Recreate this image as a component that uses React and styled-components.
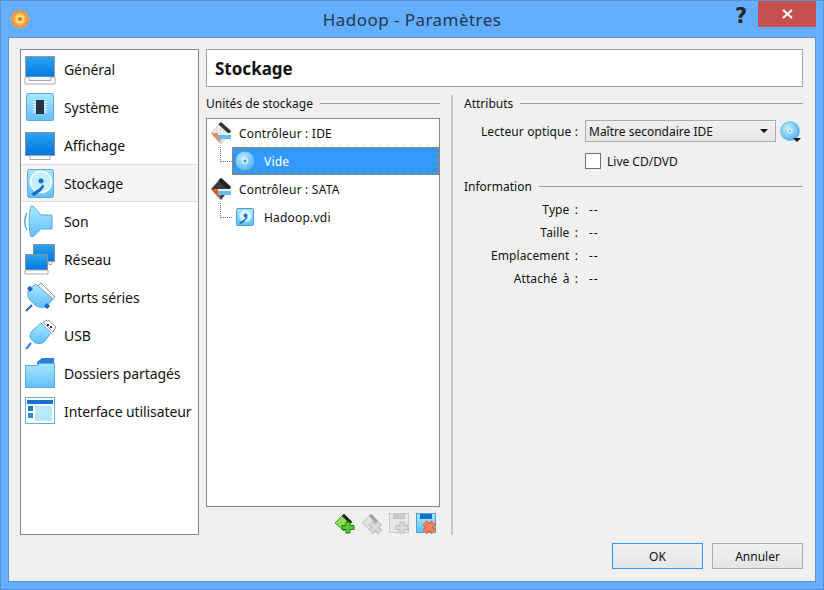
import React from 'react';
import styled, { createGlobalStyle } from 'styled-components';

const Global = createGlobalStyle`
  html, body { margin: 0; padding: 0; width: 824px; height: 590px; overflow: hidden; background: #63aeff; }
  * { box-sizing: border-box; }
`;

const Window = styled.div`
  width: 824px; height: 590px; display: flex; flex-direction: column;
  background: #63aeff; border: 1px solid #5a93cf;
  font-family: "Noto Sans", "Liberation Sans", sans-serif; color: #111;
`;
const TitleBar = styled.div`
  height: 36px; flex: none; display: flex; align-items: flex-start; position: relative; padding-left: 9px;
`;
const AppIcon = styled.svg`width: 20px; height: 20px; margin-top: 8px; flex: none;`;
const Title = styled.div`
  position: absolute; left: 0; right: 0; top: 7px; text-align: center;
  font-size: 17px; line-height: 23px; color: #24374f; letter-spacing: 0.45px;
`;
const HelpButton = styled.div`
  margin-left: auto; margin-right: 3px; margin-top: 2px; width: 28px; height: 26px; text-align: center;
  font: bold 21px/26px "DejaVu Sans", sans-serif; color: #262626;
`;
const CloseButton = styled.div`
  width: 58px; height: 26px; margin-right: 7px; background: #c75050;
  display: flex; align-items: center; justify-content: center;
`;
const Client = styled.div`
  flex: 1; margin: 0 7px 7px; background: #f0f0f0; border: 1px solid #5a93cf;
  padding: 11px 12px 12px 11px; display: flex; flex-direction: column; min-height: 0;
`;
const Main = styled.div`display: flex; height: 486px; flex: none;`;
const SideList = styled.div`
  width: 179px; flex: none; background: #fff; border: 1px solid #828790;
`;
const SideRow = styled.div`
  height: 38px; display: flex; align-items: center; padding-left: 2px; gap: 8px;
  font-size: 14px; color: #111;
  background: ${p => (p.$active ? '#f5f5f5' : 'transparent')};
  border-top: 1px solid ${p => (p.$active ? '#dedede' : 'transparent')};
  border-bottom: 1px solid ${p => (p.$active ? '#dedede' : 'transparent')};
`;
const SideIcon = styled.svg`width: 32px; height: 32px; flex: none; margin-left: 1px;`;
const SideLabel = styled.span`white-space: nowrap; letter-spacing: -0.1px;`;
const Content = styled.div`flex: 1; margin-left: 7px; display: flex; flex-direction: column; min-width: 0;`;
const Header = styled.div`
  height: 38px; flex: none; background: #fff; border: 1px solid #a0a0a0; padding-left: 8px;
  font-size: 17px; font-weight: 700; line-height: 37px; color: #111;
`;
const Panes = styled.div`flex: 1; display: flex; margin-top: 8px; min-height: 0;`;
const LeftPane = styled.div`width: 234px; flex: none; display: flex; flex-direction: column;`;
const Divider = styled.div`width: 2px; flex: none; background: #c8c8c8; margin-left: 11px;`;
const RightPane = styled.div`flex: 1; margin-left: 11px; min-width: 0;`;
const GroupHeading = styled.div`
  display: flex; align-items: center; gap: 7px; height: 16px; font-size: 12px; color: #111; white-space: nowrap;
  &::after { content: ''; flex: 1; height: 1px; background: #a0a0a0; }
`;
const Tree = styled.div`
  height: 389px; margin-top: 7px; background: #fff; border: 1px solid #828790; flex: none; letter-spacing: 0.2px;
`;
const TreeRow = styled.div`display: flex; align-items: center; height: 28px; font-size: 12px; white-space: nowrap;`;
const CtrlIcon = styled.svg`width: 24px; height: 24px; margin-left: 2px; flex: none;`;
const CtrlLabel = styled.span`margin-left: 6px;`;
const Elbow = styled.span`
  width: 12px; height: 15px; margin-left: 13px; margin-bottom: 14px; flex: none;
  border-left: 1px dotted #777; border-bottom: 1px dotted #777;
`;
const ChildCell = styled.div`
  flex: 1; height: 28px; display: flex; align-items: center; padding-left: 3px; gap: 9px;
  background: ${p => (p.$selected ? '#3399ff' : 'transparent')};
  color: ${p => (p.$selected ? '#fff' : '#111')};
  outline: ${p => (p.$selected ? '1px dotted #d9741c' : 'none')};
  outline-offset: -1px;
`;
const ChildIcon = styled.svg`width: 20px; height: 20px; flex: none;`;
const Toolbar = styled.div`display: flex; justify-content: flex-end; gap: 5px; margin-top: 5px; padding-right: 3px;`;
const ToolIcon = styled.svg`width: 22px; height: 22px; flex: none;`;
const FormRow = styled.div`display: flex; align-items: center; margin-top: 9px; height: 22px;`;
const FieldLabel = styled.div`
  width: 114px; flex: none; text-align: right; font-size: 12px; white-space: nowrap; letter-spacing: 0.1px;
`;
const InfoLabel = styled(FieldLabel)`word-spacing: 2px;`;
const Combo = styled.div`
  width: 191px; height: 22px; margin-left: 7px; border: 1px solid #acacac;
  background: linear-gradient(#f0f0f0, #e5e5e5);
  display: flex; align-items: center; justify-content: space-between; padding: 0 7px 0 3px; font-size: 12px;
`;
const Caret = styled.span`
  width: 0; height: 0; border-left: 4px solid transparent; border-right: 4px solid transparent; border-top: 4px solid #111;
`;
const DiscButton = styled.svg`width: 24px; height: 24px; margin-left: 3px; flex: none;`;
const CheckRow = styled.div`display: flex; align-items: center; gap: 6px; margin: 9px 0 0 121px; height: 20px; font-size: 12px;`;
const CheckBox = styled.span`width: 16px; height: 16px; background: #fff; border: 1px solid #707070; flex: none;`;
const InfoBlock = styled.div`margin-top: 7px;`;
const InfoRow = styled.div`display: flex; align-items: center; height: 23px; font-size: 12px;`;
const InfoList = styled.div`margin-top: 4px;`;
const InfoValue = styled.span`margin-left: 11px; letter-spacing: 1px;`;
const Footer = styled.div`display: flex; justify-content: flex-end; gap: 9px; margin-top: 8px;`;
const Button = styled.div`
  width: 91px; height: 26px; display: flex; align-items: center; justify-content: center; font-size: 12px;
  background: linear-gradient(#f0f0f0, #e5e5e5);
  border: 1px solid ${p => (p.$primary ? '#3399ff' : '#acacac')};
`;

const Defs = () => (
  <svg width="0" height="0" style={{ position: 'absolute' }}>
    <defs>
      <linearGradient id="scr" x1="0" y1="0" x2="0" y2="1">
        <stop offset="0" stopColor="#2aa5f2" /><stop offset="1" stopColor="#0074e0" />
      </linearGradient>
      <linearGradient id="sky" x1="0" y1="0" x2="0" y2="1">
        <stop offset="0" stopColor="#a8e8ff" /><stop offset="1" stopColor="#62c0f8" />
      </linearGradient>
      <radialGradient id="disc" cx="0.4" cy="0.35" r="0.8">
        <stop offset="0" stopColor="#c4edff" /><stop offset="1" stopColor="#3fa9ef" />
      </radialGradient>
    </defs>
  </svg>
);

const IconGeneral = () => (
  <SideIcon viewBox="0 0 32 32">
    <rect x="1.500" y="3.500" width="29" height="22" fill="url(#scr)" stroke="#9a9a9a" />
    <path d="M1 24h30v7H1z" fill="#fff" stroke="#a8a8a8" />
    <path d="M5 24v3.500h22V24" fill="#eef6fb" stroke="#a8a8a8" />
  </SideIcon>
);
const IconSystem = () => (
  <SideIcon viewBox="0 0 32 32">
    <rect x="2.500" y="2.500" width="27" height="27" rx="1" fill="url(#sky)" stroke="#5fa8e0" />
    <path d="M9 11h14M9 13.500h14M9 16h14M9 18.500h14M9 21h14" stroke="#fff" strokeWidth="1" />
    <rect x="12" y="9" width="8" height="14" fill="#263444" />
  </SideIcon>
);
const IconDisplay = () => (
  <SideIcon viewBox="0 0 32 32">
    <rect x="1.500" y="3.500" width="29" height="23" fill="url(#scr)" stroke="#8f8f8f" />
    <path d="M6 26.500h20v4H6z" fill="#fff" stroke="#a8a8a8" />
  </SideIcon>
);
const IconStorage = () => (
  <SideIcon viewBox="0 0 32 32">
    <rect x="3.500" y="2.500" width="26" height="28" rx="2" fill="url(#sky)" stroke="#5fa8e0" />
    <circle cx="17" cy="15" r="10.500" fill="#c8edfc" stroke="#fff" strokeWidth="1.500" />
    <circle cx="17" cy="14" r="2.500" fill="#0d6fc8" />
    <path d="M7 27l9-6 3-4 1 3-3 4-7 5z" fill="#0d6fc8" />
  </SideIcon>
);
const IconSound = () => (
  <SideIcon viewBox="0 0 32 32">
    <path d="M7 1h2l8 9h11v14H17l-8 8H7C4.500 24 4.500 9 7 1z" fill="url(#sky)" stroke="#5fa8e0" />
    <path d="M3 8C0 13 0 20 3 25" fill="none" stroke="#3a9be6" strokeWidth="1.300" />
  </SideIcon>
);
const IconNetwork = () => (
  <SideIcon viewBox="0 0 32 32">
    <rect x="9.500" y="1.500" width="21" height="17" fill="url(#scr)" stroke="#8f8f8f" />
    <path d="M25 18.500h3v3h-3z" fill="#fff" stroke="#a8a8a8" />
    <rect x="1.500" y="11.500" width="22" height="16" fill="url(#scr)" stroke="#8f8f8f" />
    <path d="M1 27h23v4H1z" fill="#fff" stroke="#a8a8a8" />
  </SideIcon>
);
const IconSerial = () => (
  <SideIcon viewBox="0 0 32 32">
    <path d="M17 2l14 14-4 4L13 6z" fill="#fff" stroke="#8f8f8f" />
    <path d="M12 3l17 15-6 7c-3 2-8 2-12-1l-5-5C3 15 3 11 5 8z" fill="url(#sky)" stroke="#5fa8e0" />
    <path d="M3 7l3-2 3 3-3 3zM20 25l3-3 3 3-3 3z" fill="#1a66c0" />
    <path d="M8 24l-6 6" stroke="#1a66c0" strokeWidth="2" />
  </SideIcon>
);
const IconUsb = () => (
  <SideIcon viewBox="0 0 32 32">
    <path d="M19 3l5-2 8 7-3 5z" fill="#fff" stroke="#8f8f8f" />
    <rect x="23" y="5" width="2" height="2" fill="#333" />
    <rect x="26" y="7" width="2" height="2" fill="#333" />
    <path d="M17 4l10 10-7 9c-3 2-7 2-10 0L7 20c-2-3-1-6 1-8z" fill="url(#sky)" stroke="#5fa8e0" />
    <path d="M7 24l-5 6" stroke="#2c86dc" strokeWidth="2" />
  </SideIcon>
);
const IconFolder = () => (
  <SideIcon viewBox="0 0 32 32">
    <path d="M13 5l5-4h12v7H13z" fill="#2a7fd4" />
    <path d="M1.500 8.500h11l3-2h15v24h-29z" fill="url(#sky)" stroke="#5fa8e0" />
  </SideIcon>
);
const IconUi = () => (
  <SideIcon viewBox="0 0 32 32">
    <rect x="1.500" y="2.500" width="29" height="26" fill="#fff" stroke="#62aee8" />
    <rect x="3" y="5" width="26" height="4" fill="#1a6fc8" />
    <rect x="4" y="11" width="5" height="5" fill="#1a7ad0" />
    <rect x="4" y="18" width="5" height="5" fill="#2a8ae0" />
    <rect x="11" y="11" width="17" height="15" fill="#b9e8fc" />
  </SideIcon>
);

const Ctrl = ({ top, band, tail }) => (
  <CtrlIcon viewBox="0 0 24 24">
    <path d="M12 1l10 9-10 13L2 12z" fill={top} stroke="#a9a9a9" strokeWidth="0.500" />
    <path d="M12 1l10 9-2 3L9.500 3.500z" fill={band} />
    <path d="M2 12l9 10 1-4v-6H7z" fill={tail} />
    <rect x="9" y="12" width="13" height="6" fill="#63bdf2" />
    <rect x="9" y="12" width="13" height="2" fill="#e6f6ff" />
  </CtrlIcon>
);
const HddIcon = () => (
  <ChildIcon viewBox="0 0 20 20">
    <rect x="1.500" y="1.500" width="17" height="17" rx="1.500" fill="url(#sky)" stroke="#4d9ede" />
    <circle cx="10.500" cy="9" r="6" fill="#dff5fe" />
    <circle cx="10.500" cy="8.500" r="2" fill="#0d6fc8" />
    <path d="M4 16l6-4 2-3 .5 2-2.500 3-4 3z" fill="#0d6fc8" />
  </ChildIcon>
);
const DiscIcon = () => (
  <ChildIcon viewBox="0 0 20 20">
    <circle cx="10" cy="10" r="9.500" fill="url(#disc)" />
    <circle cx="10" cy="10" r="3" fill="#d5f1fd" />
    <circle cx="10" cy="10" r="1.500" fill="#3a8fd9" />
  </ChildIcon>
);

const ROWS = [
  ['Général', IconGeneral], ['Système', IconSystem], ['Affichage', IconDisplay], ['Stockage', IconStorage],
  ['Son', IconSound], ['Réseau', IconNetwork], ['Ports séries', IconSerial], ['USB', IconUsb],
  ['Dossiers partagés', IconFolder], ['Interface utilisateur', IconUi],
];
const INFO = ['Type :', 'Taille :', 'Emplacement :', 'Attaché à :'];
const LOBES = [0, 45, 90, 135, 180, 225, 270, 315];
const PLUS = 'M12 10h4v3.500h4v4h-4V21h-4v-3.500H8v-4h4z';
const CROSS = 'M9.500 10.500l9.500 9.500M19 10.500L9.500 20';

export default function App() {
  return (
    <Window>
      <Global />
      <Defs />
      <TitleBar>
        <AppIcon viewBox="0 0 20 20">
          {LOBES.map(a => (
            <circle key={a} cx="10" cy="3" r="2.700" fill="#ee9a3a" transform={`rotate(${a} 10 10)`} />
          ))}
          <circle cx="10" cy="10" r="6.500" fill="#f5b04a" />
          <circle cx="10" cy="10" r="4.500" fill="#fbe07a" />
          <circle cx="10" cy="10" r="2" fill="#e8701c" />
        </AppIcon>
        <Title>Hadoop - Paramètres</Title>
        <HelpButton>?</HelpButton>
        <CloseButton>
          <svg width="11" height="10" viewBox="0 0 11 10">
            <path d="M1 1l9 8M10 1l-9 8" stroke="#fff" strokeWidth="2" />
          </svg>
        </CloseButton>
      </TitleBar>
      <Client>
        <Main>
          <SideList>
            {ROWS.map(([label, Icon]) => (
              <SideRow key={label} $active={label === 'Stockage'}>
                <Icon />
                <SideLabel>{label}</SideLabel>
              </SideRow>
            ))}
          </SideList>
          <Content>
            <Header>Stockage</Header>
            <Panes>
              <LeftPane>
                <GroupHeading>Unités de stockage</GroupHeading>
                <Tree>
                  <TreeRow><Ctrl top="#e9e6e0" band="#333" tail="#e0905f" /><CtrlLabel>Contrôleur : IDE</CtrlLabel></TreeRow>
                  <TreeRow><Elbow /><ChildCell $selected><DiscIcon />Vide</ChildCell></TreeRow>
                  <TreeRow><Ctrl top="#3a3a3a" band="#222" tail="#e85a2a" /><CtrlLabel>Contrôleur : SATA</CtrlLabel></TreeRow>
                  <TreeRow><Elbow /><ChildCell><HddIcon />Hadoop.vdi</ChildCell></TreeRow>
                </Tree>
                <Toolbar>
                  <ToolIcon viewBox="0 0 22 22">
                    <path d="M1 11l9-9 8 8-8 9z" fill="#8fdc58" stroke="#4a9e26" />
                    <path d="M10 2l8 8-2 2-8-8z" fill="#222" />
                    <path d={PLUS} fill="#5cc832" stroke="#1f7a10" />
                  </ToolIcon>
                  <ToolIcon viewBox="0 0 22 22">
                    <path d="M1 11l9-9 8 8-8 9z" fill="#e2e2e2" stroke="#c4c4c4" />
                    <path d="M10 2l8 8-2 2-8-8z" fill="#a0a0a0" />
                    <path d={CROSS} stroke="#b0b0b0" strokeWidth="6" />
                    <path d={CROSS} stroke="#d6d6d6" strokeWidth="4" />
                  </ToolIcon>
                  <ToolIcon viewBox="0 0 22 22">
                    <rect x="1.500" y="1.500" width="19" height="19" fill="#e6e6e6" stroke="#cbcbcb" />
                    <rect x="5" y="2" width="12" height="5" fill="#c8c8c8" />
                    <path d={PLUS} fill="#dcdcdc" stroke="#bababa" />
                  </ToolIcon>
                  <ToolIcon viewBox="0 0 22 22">
                    <rect x="1.500" y="1.500" width="19" height="19" fill="url(#sky)" stroke="#4d9ede" />
                    <rect x="5" y="2" width="12" height="5" fill="#1a6fc8" />
                    <path d={CROSS} stroke="#dc5530" strokeWidth="6" />
                    <path d={CROSS} stroke="#f8805a" strokeWidth="4" />
                  </ToolIcon>
                </Toolbar>
              </LeftPane>
              <Divider />
              <RightPane>
                <GroupHeading>Attributs</GroupHeading>
                <FormRow>
                  <FieldLabel>Lecteur optique :</FieldLabel>
                  <Combo>Maître secondaire IDE<Caret /></Combo>
                  <DiscButton viewBox="0 0 24 24">
                    <circle cx="11" cy="12" r="9.500" fill="url(#disc)" stroke="#3f9fe0" strokeWidth="0.500" />
                    <circle cx="11" cy="12" r="2.500" fill="#d5f1fd" />
                    <circle cx="11" cy="12" r="1" fill="#7aa8cc" />
                    <path d="M14 19h8l-4 4z" fill="#111" />
                  </DiscButton>
                </FormRow>
                <CheckRow><CheckBox />Live CD/DVD</CheckRow>
                <InfoBlock>
                  <GroupHeading>Information</GroupHeading>
                  <InfoList>
                    {INFO.map(t => (
                      <InfoRow key={t}><InfoLabel>{t}</InfoLabel><InfoValue>--</InfoValue></InfoRow>
                    ))}
                  </InfoList>
                </InfoBlock>
              </RightPane>
            </Panes>
          </Content>
        </Main>
        <Footer>
          <Button $primary>OK</Button>
          <Button>Annuler</Button>
        </Footer>
      </Client>
    </Window>
  );
}
